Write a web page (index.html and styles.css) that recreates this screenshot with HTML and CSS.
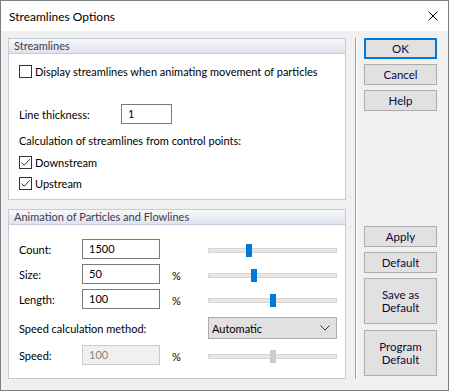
FILE: index.html
```html
<!doctype html>
<html lang="en">
  <head>
    <meta charset="UTF-8" />
    <title>Streamlines Options</title>
    <link rel="stylesheet" href="styles.css">
  </head>
  <body>
    <div class="window">
      <div class="titlebar">
        <span class="title">Streamlines Options</span>
        <svg class="close" width="10" height="10" viewBox="0 0 10 10">
          <path d="M0.5 0.5 L9.5 9.5 M9.5 0.5 L0.5 9.5" stroke="#000" stroke-width="1" fill="none" />
        </svg>
      </div>

      <div class="content">
        <div class="main">
          <!-- Streamlines group -->
          <div class="group group-streamlines">
            <div class="group-header">Streamlines</div>
            <div class="group-body">
              <label class="check row-display">
                <span class="box"></span>
                Display streamlines when animating movement of particles
              </label>
              <div class="row row-thickness">
                <span class="label">Line thickness:</span>
                <span class="input input-thickness">1</span>
              </div>
              <div class="row row-calc">Calculation of streamlines from control points:</div>
              <label class="check row-down">
                <span class="box checked">
                  <svg width="11" height="11" viewBox="0 0 11 11">
                    <path d="M1.5 5.5 L4.2 8.3 L9.8 2.2" stroke="#333" stroke-width="1" fill="none" />
                  </svg>
                </span>
                Downstream
              </label>
              <label class="check row-up">
                <span class="box checked">
                  <svg width="11" height="11" viewBox="0 0 11 11">
                    <path d="M1.5 5.5 L4.2 8.3 L9.8 2.2" stroke="#333" stroke-width="1" fill="none" />
                  </svg>
                </span>
                Upstream
              </label>
            </div>
          </div>

          <!-- Animation group -->
          <div class="group group-anim">
            <div class="group-header">Animation of Particles and Flowlines</div>
            <div class="group-body">
              <div class="field row-count">
                <span class="label">Count:</span>
                <span class="input">1500</span>
                <span class="unit"></span>
                <div class="slider"><span class="thumb" style="left: 37px"></span></div>
              </div>
              <div class="field row-size">
                <span class="label">Size:</span>
                <span class="input">50</span>
                <span class="unit">%</span>
                <div class="slider"><span class="thumb" style="left: 42px"></span></div>
              </div>
              <div class="field row-length">
                <span class="label">Length:</span>
                <span class="input">100</span>
                <span class="unit">%</span>
                <div class="slider"><span class="thumb" style="left: 61px"></span></div>
              </div>
              <div class="field row-method">
                <span class="label wide">Speed calculation method:</span>
                <div class="combo">
                  <span>Automatic</span>
                  <svg width="10" height="6" viewBox="0 0 10 6">
                    <path d="M0.5 0.5 L5 5 L9.5 0.5" stroke="#333" stroke-width="1" fill="none" />
                  </svg>
                </div>
              </div>
              <div class="field row-speed disabled">
                <span class="label">Speed:</span>
                <span class="input">100</span>
                <span class="unit">%</span>
                <div class="slider"><span class="thumb" style="left: 61px"></span></div>
              </div>
            </div>
          </div>
        </div>

        <div class="separator"></div>

        <div class="buttons">
          <button class="btn default-btn">OK</button>
          <button class="btn">Cancel</button>
          <button class="btn">Help</button>
          <div class="spacer"></div>
          <button class="btn">Apply</button>
          <button class="btn">Default</button>
          <button class="btn tall"><span>Save as</span><span>Default</span></button>
          <button class="btn tall last"><span>Program</span><span>Default</span></button>
        </div>
      </div>
    </div>
  </body>
</html>
```

FILE: styles.css
```css
:root {
  --dialog-bg: #f0f0f0;
  --text-color: #000;
  --btn-text: #0a0a3c;
  --group-border: #c4cbdb;
  --input-border: #7a7a7a;
  --btn-bg: #e1e1e1;
  --btn-border: #adadad;
  --accent: #0078d7;
}

* {
  box-sizing: border-box;
}

body {
  margin: 0;
  font-family: Lato, "Noto Sans", sans-serif;
  font-size: 11px;
  color: var(--text-color);
}

.window {
  width: 449px;
  height: 391px;
  border: 1px solid #7f7f7f;
  background: var(--dialog-bg);
  display: flex;
  flex-direction: column;
}

.titlebar {
  height: 30px;
  background: white;
  display: flex;
  align-items: center;
  padding: 0 10px 0 8px;
  flex-shrink: 0;
}

.title {
  flex: 1;
  font-size: 12px;
}

.content {
  display: flex;
  padding: 7px 0 0 7px;
}

.main {
  width: 338px;
  display: flex;
  flex-direction: column;
  gap: 9px;
}

/* Group boxes */
.group {
  background: white;
  border: 1px solid var(--group-border);
}

.group-streamlines {
  height: 162px;
}

.group-anim {
  height: 170px;
}

.group-header {
  height: 15px;
  line-height: 14px;
  padding-left: 5px;
  color: #3c3c50;
  background: linear-gradient(#f7f8fa, #dfe3ec);
  border-bottom: 1px solid var(--group-border);
}

.group-body {
  padding: 0 0 0 10px;
  display: flex;
  flex-direction: column;
}

.check,
.row {
  display: flex;
  align-items: center;
  height: 20px;
}

.box {
  width: 13px;
  height: 13px;
  border: 1px solid #333;
  background: white;
  margin-right: 3px;
  display: flex;
  align-items: center;
  justify-content: center;
}

.row-display {
  margin-top: 7px;
}

.row-thickness {
  margin-top: 23px;
}

.row-thickness .label {
  width: 102px;
}

.row-calc {
  margin-top: 6px;
}

.row-down {
  margin-top: 2px;
}

.row-up {
  margin-top: 1px;
}

.input {
  height: 20px;
  border: 1px solid var(--input-border);
  background: white;
  padding-left: 6px;
  line-height: 17px;
}

.input-thickness {
  width: 51px;
}

/* Animation fields */
.field {
  display: flex;
  align-items: center;
  height: 20px;
}

.field .label {
  width: 63px;
}

.field .label.wide {
  width: 189px;
}

.field .input {
  width: 78px;
}

.field .unit {
  width: 48px;
  padding-left: 12px;
  padding-top: 3px;
}

.row-count {
  margin-top: 14px;
}

.row-size,
.row-length {
  margin-top: 5px;
}

.row-method {
  margin-top: 8px;
  height: 22px;
}

.row-speed {
  margin-top: 6px;
}

.slider {
  position: relative;
  width: 129px;
  height: 5px;
  background: #e7e7e7;
  border: 1px solid #d6d6d6;
  margin-top: 2px;
}

.thumb {
  position: absolute;
  top: -5px;
  width: 6px;
  height: 13px;
  background: var(--accent);
}

.disabled .input {
  background: #f0f0f0;
  border-color: #cccccc;
  color: #838383;
}

.disabled .thumb {
  background: #cccccc;
}

.combo {
  width: 129px;
  height: 22px;
  background: var(--btn-bg);
  border: 1px solid var(--btn-border);
  display: flex;
  align-items: center;
  justify-content: space-between;
  padding: 0 6px 0 3px;
}

/* Separator and buttons */
.separator {
  width: 1px;
  height: 341px;
  margin-left: 9px;
  background: #a0a0a0;
  box-shadow: 1px 0 0 white;
}

.buttons {
  margin-left: 8px;
  width: 73px;
  display: flex;
  flex-direction: column;
  gap: 5px;
}

.btn {
  height: 21px;
  background: var(--btn-bg);
  border: 1px solid var(--btn-border);
  font-family: inherit;
  font-size: 11.5px;
  color: var(--btn-text);
  padding: 0;
  line-height: 13px;
}

.default-btn {
  border: 2px solid var(--accent);
}

.spacer {
  height: 105px;
}

.tall {
  height: 46px;
  display: flex;
  flex-direction: column;
  align-items: center;
  justify-content: center;
}

.last {
  margin-top: 1px;
}
```
